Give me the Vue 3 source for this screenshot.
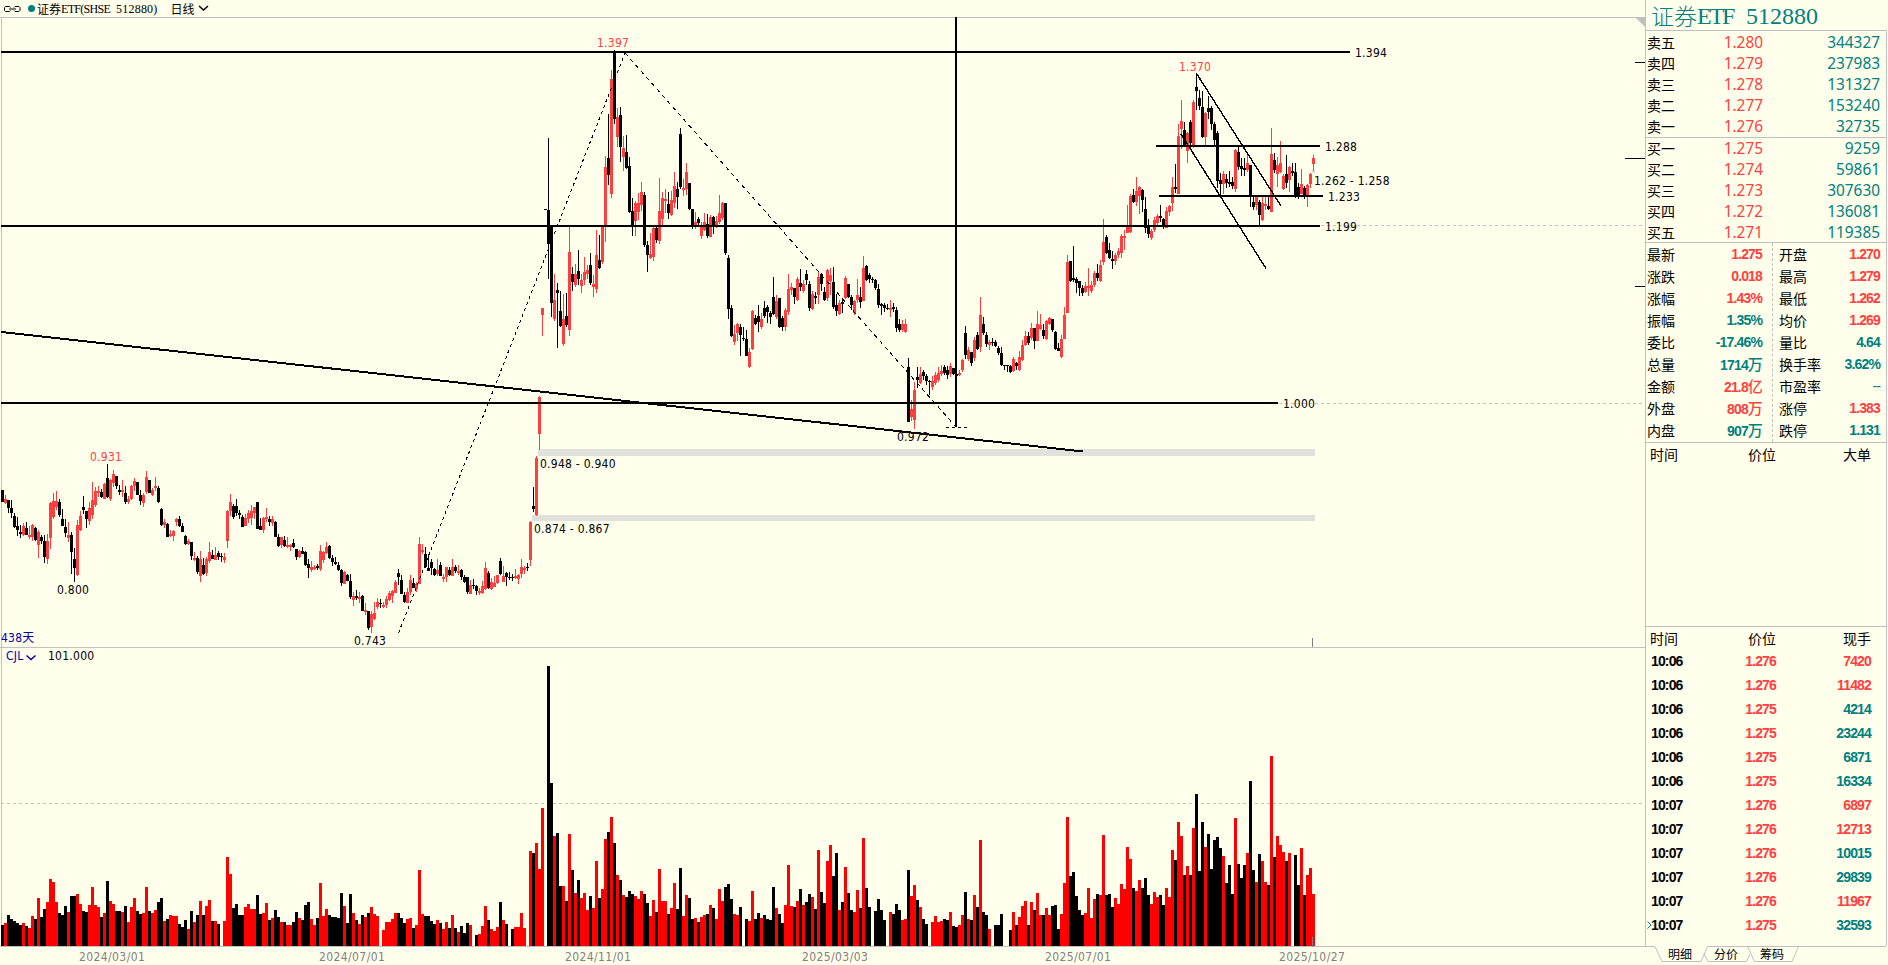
<template>
  <div class="terminal">
    <section class="chart">
      <header class="chart-head">
        <svg class="link-icon" width="17" height="8" viewBox="0 0 17 8">
          <path d="M5.500 1.500H1.500L.5 2.500v3l1 1H5.500L6.500 5.500M6.500 2.500L5.500 1.500M10 2.500l1-1h4l1 1v3l-1 1H11l-1-1M5 4h7" />
        </svg>
        <i class="dot"></i>
        <span class="name">证券<b>ETF(SHSE</b><em>512880)</em></span>
        <span class="period">日线</span>
        <svg class="arrow" width="11" height="7" viewBox="0 0 11 7"><path d="M1 1l4.500 4L10 1" /></svg>
      </header>

      <svg class="price" width="1645" height="630" viewBox="0 17 1645 630">
        <path class="frame" d="M0 17.5H1645M1.500 17V647" />
        <rect class="gap" x="538" y="449" width="777" height="7" />
        <rect class="gap" x="532" y="515" width="783" height="6" />
        <rect class="gap" x="1312" y="170" width="3" height="3" />
        <path class="grid" d="M1 225.5H1643M1 403.5H1643" />
        <g v-for="c in candles" :key="c.x" :class="c.up ? 'up' : 'down'">
          <rect :x="c.x + 1" :y="c.high" width="1" :height="Math.max(1, c.low - c.high)" />
          <rect :x="c.x" :y="c.top" width="3" :height="Math.max(1, c.bottom - c.top)" />
        </g>
        <path class="dash-steep" d="M398.500 633L625 53" />
        <path class="dash-flat" d="M625 53L956 427" />
        <path class="dash-base" d="M946 427.5H967" />
        <path class="level" d="M1 52H1350M1 226H1320M1 403H1278M1156 146H1320M1159 196H1323M956 17V427" />
        <path class="level" d="M1 332L1083 451.500" />
        <path class="channel" d="M1196.500 73.500L1281 206M1181 134L1266 268.500" />
        <path class="tick" d="M1635 62.500H1645M1625 158.500H1645M1635 286.500H1645" />
        <path class="corner" d="M1636 18H1645V27Z" />
        <path class="mark" d="M1312.500 638V647" />
        <text v-for="l in labels" :key="l.text" :x="l.x" :y="l.y" :class="l.cls">{{ l.text }}</text>
      </svg>

      <svg class="volume" width="1645" height="318" viewBox="0 647 1645 318">
        <path class="frame" d="M0 647.5H1645M1.500 647V946M0 946.5H1645" />
        <path class="grid" d="M1 803.5H1643" />
        <rect
          v-for="v in volumes"
          :key="v.x"
          :class="v.up ? 'vol-up' : 'down'"
          :x="v.x"
          :y="v.y"
          width="3"
          :height="946 - v.y"
        />
        <path class="mark" d="M1312.500 937V947" />
        <text class="blue" x="6" y="660">CJL</text>
        <path class="blue-arrow" d="M26.500 655.500l4.500 4L35.500 655.500" />
        <text x="48" y="660">101.000</text>
        <text v-for="d in dates" :key="d.text" class="date" :x="d.x" y="961">{{ d.text }}</text>
      </svg>
    </section>

    <aside class="side">
      <h1>证券<b>ETF</b><em>512880</em></h1>
      <div class="panel">
        <div class="book">
          <div v-for="r in asks" :key="r[0]" class="book-row">
            <span>{{ r[0] }}</span><span class="red">{{ r[1] }}</span><span class="teal">{{ r[2] }}</span>
          </div>
        </div>
        <div class="book bids">
          <div v-for="r in bids" :key="r[0]" class="book-row">
            <span>{{ r[0] }}</span><span class="red">{{ r[1] }}</span><span class="teal">{{ r[2] }}</span>
          </div>
        </div>
        <div class="stats">
          <div v-for="(col, i) in stats" :key="i" class="stats-col">
            <div v-for="s in col" :key="s[0]" class="stat">
              <span>{{ s[0] }}</span>
              <span :class="['num', s[2]]">{{ s[1] }}<i v-if="s[3]">{{ s[3] }}</i></span>
            </div>
          </div>
        </div>
        <div class="big-orders">
          <div class="list-head"><span>时间</span><span>价位</span><span>大单</span></div>
        </div>
        <div class="trades">
          <div class="list-head"><span>时间</span><span>价位</span><span>现手</span></div>
          <div v-for="(t, i) in trades" :key="i" class="trade num">
            <svg v-if="i === trades.length - 1" class="cursor" width="5" height="8" viewBox="0 0 5 8">
              <path d="M.5 .5L4 4L.5 7.500" />
            </svg>
            <span>{{ t[0] }}</span><span class="red">{{ t[1] }}</span><span :class="t[3]">{{ t[2] }}</span>
          </div>
        </div>
      </div>
      <div class="tabs">
        <svg class="tab-lines" width="242" height="17" viewBox="0 0 242 17">
          <path d="M0 .5H10L17 15.500H56L62.500 .5H241M59 8l4 7.500H101.500L105 8M102.500 .5l7 15H147L153.500 .5" />
        </svg>
        <span>明细</span><span>分价</span><span>筹码</span>
      </div>
    </aside>
  </div>
</template>

<script setup>
// bar tops in thirds of a pixel, R = up day, K = down day, - = no bar
const volumeBlocks = [
  {
    base: 640,
    rows: `K855 R849 K825 K837 K843 K849 K855 R849 K858 R864 R828 K837 R774 K831 K807 R786 R717 R726 R786 K819
    K825 K798 R816 K768 K768 R762 R792 K813 K816 R795 R741 R795 R801 K831 R819 K723 R783 R792 K813 K813
    R816 K798 R846 R801 R774 K813 K822 R819 R741 K813 R819 R810 K786 K774 R843 K837 R825 R828 R828 K852
    K861 K840 R867 K813 R846 K825 R783 K825 R798 R780 K843 R843 K852 - R843 R651 R702 K804 K792 K825
    K825 R801 R792 R807 R807 K765 K822 R819 R789 K840 R834 K810 K831 R846 K846 R855 R855 K846 K816 R834
    K840 K795 K786 R837 R855 K834 R729 R828 R807 K825 K831 K831 K834 K759 R798 K849 K762 R819 K840 R852
    K825 R831 K819 R801 R822 R828 - R870 R846 R846 R837 R819 K819 K834 K849 R837 R834 K864 R855 R690
    R822 K828 K828 K843 K852 R840 K849 R867 R846 K864 R825 K864 R876 K858 K879 K849 R855 - K885 R882
    R858 R798 K840 R867 R873 R861 K786 R840 K852 - K867 R861 R861 R819 R864 - R633 K639 R609 R687
    R504 - K78 K429 R588 K579 K738 R738 K783 R582 K690 R759 K720 R774 R759 R810 K768 R804 R663 K774
    R747 R597 K576 R531 K609 R705 K720 R765 K771 K753 K762 R768 R777 R753 K762 K789 R828 R780 K816 R687
    R783 R783 K822 R804 R729 K807 K684 R828 R765 K774 K837 R834 K846 R831 R825 K822 R795 K804 R837 R747
    R783 K741 K732 K777 R822 R825 K801 - K837 R843 R753 K837 K819 R834 K825 K837 K840 K741 R804 K822
    K849 R795 R675 R798 K801 R783 K747 R795 K786 K762 R771 K807 R630 K756 K789 R663 R615 K708 K639 R810
    K786 R681 K759 K810 R816 R750 K804 R594 K744 K801 - K813 K777 K810 K840 - R816 K822 K792 K810`
  },
  {
    base: 740,
    rows: `R540 R537 K390 R468 R435 K480 R501 K537 K552 - R546 R528 R546 R543 K537 K540 R516 K558 K561 R555
    R525 K456 R537 K540 R465 K501 R300 K516 K525 R567 - K555 K555 K522 - - K570 R516 K555 R531
    R498 R483 K555 R486 K510 R459 R525 K525 R504 R525 K498 K495 K567 R522 R429 R231 K408 K396 K468 K510
    K525 R519 R444 R534 R477 K462 R465 R285 K465 K462 K501 R474 R492 R432 R447 R321 R357 K444 R453 R420
    K444 K414 K465 R492 R456 R471 K465 K495 R444 R471 R330 K360 R246 R288 K405 R378 K405 R264 K162 K393
    K246 R321 K282 K387 K300 K291 K324 R348 K429 K375 K462 R234 K372 K414 K375 R339 K123 K390 R426 K342
    R363 R426 K435 R48 K351 R288 R315 R336 K363 R339 - K345 K435 R324 K465 R405 R384 R462`
  }
]

// high, body top, body bottom, low
const candleBlocks = [
  {
    base: 440,
    rows: `150,150,185,185 165,177,189,192 180,180,203,218 180,203,220,235 218,228,262,265 230,258,270,288
    255,276,282,294 248,258,285,288 246,264,285,285 258,285,292,297 252,255,290,303 262,264,300,303
    270,276,315,354 286,290,303,312 285,303,350,369 282,303,357,372 185,189,294,327 158,183,230,237
    153,183,200,209 177,186,225,231 207,237,257,258 237,261,279,291 245,285,294,306 276,285,336,402
    323,357,384,426 240,255,404,408 213,228,270,273 168,201,210,222 213,213,236,264 185,204,243,255
    126,180,225,237 141,153,195,201 137,153,159,171 148,156,172,174 129,132,176,178 72,114,172,175
    117,120,178,182 90,102,129,141 108,108,137,147 135,150,155,165 120,150,155,171 137,159,186,192
    168,177,186,192 136,138,177,180 114,123,138,153 126,126,164,166 150,165,183,195 160,165,188,201
    93,111,156,162 120,120,158,160 144,150,165,168 112,138,144,152 138,144,186,189 204,207,255,258
    237,246,255,264 249,252,290,291 270,283,288,291 270,272,288,302 234,237,246,257 228,236,258,261
    248,258,275,276 285,288,311,314 297,303,311,315 306,306,348,360 336,354,359,362 348,354,395,402
    333,357,407,426 354,375,402,405 351,357,398,408 306,336,362,369 330,345,356,358 321,345,359,360
    334,339,350,360 339,348,351,366 339,351,360,369 209,213,303,323 162,186,213,228 192,198,230,237
    177,198,219,228 210,219,224,237 226,231,260,261 222,234,258,258 210,219,236,249 196,213,233,255
    201,201,220,237 186,186,266,267 234,258,269,270 231,234,270,279 205,231,236,246 228,237,246,258
    228,237,248,258 243,246,290,291 282,291,318,321 291,291,314,323 288,300,317,320 291,315,321,323
    311,315,321,332 297,310,321,323 327,327,351,359 329,333,351,354 320,333,341,342 333,336,375,378
    357,372,384,414 363,381,389,396 374,380,386,389 372,378,383,390 315,333,387,392 333,336,359,369
    306,320,338,342 315,318,354,356 345,354,366,378 350,366,372,375 366,376,389,393 386,390,429,438
    392,395,431,432 402,404,423,423 402,423,470,477 456,467,479,497 450,468,473,480 456,471,476,489
    464,468,512,513 488,509,515,525 512,512,563,570 512,521,561,579 486,519,537,540 474,486,500,507
    477,489,492,503 485,495,501,504 468,477,495,504 452,459,479,483 449,452,467,488 420,426,458,459
    387,399,410,434`
  },
  {
    base: 380,
    rows: `585,600,641,642 636,645,666,669 624,636,668,669 585,600,636,645 594,609,624,624 605,612,627,635
    471,492,611,612 492,510,516,522 501,521,560,563 522,563,572,573 537,545,564,585 564,567,584,587
    537,570,582,588 546,555,587,588 582,590,598,606 561,561,590,606 561,570,585,587 537,561,587,588
    555,562,572,579 555,573,578,585 567,569,591,599 585,591,605,608 591,591,636,641 600,615,641,642
    597,615,618,627 615,617,633,645 624,633,639,645 603,618,639,641 546,564,626,629 573,579,624,626
    594,606,626,629 588,609,620,621 585,585,609,612 534,543,581,584 557,587,605,606 576,579,590,617
    576,590,593,600 581,592,595,602 567,588,594,597 582,585,597,612 537,561,582,593 557,563,570,582
    549,561,564,573 423,426,540,558 321,378,387,396 228,234,405,408 48,51,161,210`
  },
  {
    base: 30,
    rows: `834,834,855,917 537,537,540,540 324,540,641,747 587,587,819,861 732,810,867,873 759,780,789,954
    783,843,888,891 792,867,941,948 789,857,885,890 588,666,899,917 711,732,756,783 702,732,765,770
    660,723,747,765 732,750,768,789 681,726,750,765 705,720,732,747 669,705,759,765 735,762,771,800
    600,675,776,789 615,690,714,718 590,590,696,702 378,411,587,636 252,384,434,465 120,147,491,504
    60,66,267,282 234,261,321,351 231,255,350,396 318,354,380,423 315,366,414,416 381,408,545,549
    504,543,590,618 513,519,573,618 489,519,546,570 456,486,525,543 486,495,645,651 633,645,675,726
    609,672,683,687 590,594,681,693 591,594,630,639 444,543,633,642 486,504,567,585 477,507,513,549
    486,522,549,567 483,510,554,558 426,468,519,534 456,477,501,537 294,312,471,477 447,474,480,498
    399,426,477,495 459,459,537,540 537,537,585,597 546,576,585,597 561,567,579,591 576,590,618,627
    549,576,600,603 552,582,618,624 555,561,620,621 558,561,585,612 558,573,588,594 495,549,576,582
    516,519,564,570 519,519,669,675 675,684,837,867 825,834,917,921 885,912,936,945 879,882,909,933
    882,891,914,978 891,924,927,933 900,927,978,978 954,966,1011,1014 840,843,957,960 855,864,882,885
    825,858,876,906 849,867,891,897 813,834,858,864 825,831,846,879 843,849,861,882 741,801,852,855
    795,813,860,867 804,804,891,893 858,864,891,903 834,840,891,903 732,777,846,855 759,771,780,795
    774,774,801,822 741,747,810,813 717,759,771,783 750,762,783,789 720,732,750,765 753,762,834,843
    783,792,837,840 786,798,804,822 726,741,795,822 729,732,762,783 771,786,810,813 717,720,804,813
    714,735,753,795 711,756,831,837 792,825,843,858 810,819,852,855 804,816,822,849 738,744,804,807
    762,762,801,804 795,801,825,840 810,813,848,855 747,795,810,819 771,801,816,834 678,714,812,813
    705,708,750,753 729,735,747,759 741,747,750,759 747,750,774,780 762,777,825,834 819,822,828,855
    819,825,834,846 822,834,837,840 810,834,840,861 819,831,837,846 831,840,894,906 867,882,900,906
    870,882,900,906 867,882,906,909`
  },
  {
    base: 240,
    rows: `354,381,545,546 480,507,531,543 426,450,540,567 381,411,420,444 381,402,429,432 390,396,408,420
    402,408,423,435 420,423,426,465 408,423,441,450 396,405,429,435 381,399,420,426 375,393,402,408
    375,381,399,405 378,390,405,417 369,378,402,411 384,384,402,405 384,402,408,410 390,399,405,408
    357,360,390,396 258,279,345,357 321,330,357,363 336,336,369,378 291,300,354,363 276,285,327,330
    171,225,321,336 231,252,279,285 276,285,312,321 300,306,315,330 294,306,309,318 300,306,318,321
    318,324,339,345 321,339,375,378 375,375,378,390 375,375,378,396 375,378,396,399 351,357,393,396
    366,369,378,390 333,351,390,393 300,315,360,363 273,288,315,318 276,288,309,315 249,264,294,300
    264,264,303,327 213,252,303,303 222,255,267,270 252,270,288,297 240,243,297,300 231,234,252,255
    237,237,270,276 273,276,327,330 309,324,333,333 285,297,351,354 201,225,297,297 45,66,219,219`
  },
  {
    base: 50,
    rows: `633,633,693,697 588,685,690,696 681,687,699,729 693,693,714,738 705,714,729,738 696,708,726,729
    654,708,714,738 693,705,723,729 663,669,705,711 642,669,684,693 630,645,693,696 507,576,636,645
    555,561,609,612 579,600,624,627 603,627,633,657 609,615,633,645 594,603,615,624 552,558,609,624
    540,558,564,600 465,528,549,549 432,438,546,549 417,435,456,459 381,423,456,468 408,411,438,492
    417,420,450,486 441,477,534,549 507,531,552,564 537,543,564,570 501,510,540,546 492,498,519,528
    465,498,504,516 504,507,531,537 471,483,534,534 465,468,486,498 381,411,459,483 342,411,417,429
    222,258,432,432 150,213,237,297 216,240,288,291 246,249,303,339 210,216,279,300 150,156,291,294
    69,111,123,180 120,144,168,180 123,171,261,264 186,189,261,288 138,174,186,207 168,174,222,240
    216,222,270,288 243,249,393,414 369,390,402,438 363,372,402,432 372,387,399,414 363,396,402,411
    381,396,408,417 297,300,417,426 288,306,351,360 324,348,357,378 324,354,360,378 312,339,360,366
    345,345,438,471 438,456,471,480 438,441,465,480 450,456,495,528 441,459,510,513 441,462,468,480
    441,468,477,480 234,312,486,486 309,330,360,369 321,345,372,411 273,339,366,369 372,378,417,420
    315,372,399,414 348,351,390,426 339,363,369,378 339,366,438,444 399,411,441,447 357,402,432,432
    408,414,441,447 402,405,438,471 369,372,402,414 315,324,342,363`
  }
]

const days = volumeBlocks.flatMap(b =>
  b.rows.trim().split(/\s+/).map(t => ({
    up: t[0] === 'R',
    y: t === '-' ? null : b.base + Math.round(Number(t.slice(1)) / 3)
  }))
).map((d, i) => ({ ...d, x: 1 + i * 3 }))

// the first bar after the long gap up closed limit-up
days[180].up = true

const volumes = days.filter(d => d.y !== null)

const candles = candleBlocks.flatMap(b =>
  b.rows.trim().split(/\s+/).map(t => t.split(',').map(n => b.base + Math.round(n / 3)))
).map(([high, top, bottom, low], i) => ({ x: 1 + i * 3, up: days[i].up, high, top, bottom, low }))

const labels = [
  { text: '0.931', x: 90, y: 461, cls: 'red' },
  { text: '1.397', x: 597, y: 47, cls: 'red' },
  { text: '1.370', x: 1179, y: 71, cls: 'red' },
  { text: '0.800', x: 57, y: 594 },
  { text: '0.743', x: 354, y: 645 },
  { text: '0.972', x: 897, y: 441 },
  { text: '1.394', x: 1355, y: 57 },
  { text: '1.288', x: 1325, y: 151 },
  { text: '1.262 - 1.258', x: 1314, y: 185 },
  { text: '1.233', x: 1328, y: 201 },
  { text: '1.199', x: 1325, y: 231 },
  { text: '1.000', x: 1283, y: 408 },
  { text: '0.948 - 0.940', x: 540, y: 468 },
  { text: '0.874 - 0.867', x: 534, y: 533 },
  { text: '438天', x: 1, y: 642, cls: 'blue' }
]

const dates = [
  { text: '2024/03/01', x: 79 },
  { text: '2024/07/01', x: 319 },
  { text: '2024/11/01', x: 565 },
  { text: '2025/03/03', x: 802 },
  { text: '2025/07/01', x: 1045 },
  { text: '2025/10/27', x: 1279 }
]

const asks = [
  ['卖五', '1.280', 344327],
  ['卖四', '1.279', 237983],
  ['卖三', '1.278', 131327],
  ['卖二', '1.277', 153240],
  ['卖一', '1.276', 32735]
]
const bids = [
  ['买一', '1.275', 9259],
  ['买二', '1.274', 59861],
  ['买三', '1.273', 307630],
  ['买四', '1.272', 136081],
  ['买五', '1.271', 119385]
]

const stats = [
  [
    ['最新', '1.275', 'red'],
    ['涨跌', '0.018', 'red'],
    ['涨幅', '1.43%', 'red'],
    ['振幅', '1.35%', 'teal'],
    ['委比', '-17.46%', 'teal'],
    ['总量', '1714', 'teal', '万'],
    ['金额', '21.8', 'red', '亿'],
    ['外盘', '808', 'red', '万'],
    ['内盘', '907', 'teal', '万']
  ],
  [
    ['开盘', '1.270', 'red'],
    ['最高', '1.279', 'red'],
    ['最低', '1.262', 'red'],
    ['均价', '1.269', 'red'],
    ['量比', '4.64', 'teal'],
    ['换手率', '3.62%', 'teal'],
    ['市盈率', '--', 'teal none'],
    ['涨停', '1.383', 'red'],
    ['跌停', '1.131', 'teal']
  ]
]

const trades = [
  ['10:06', '1.276', 7420, 'red'],
  ['10:06', '1.276', 11482, 'red'],
  ['10:06', '1.275', 4214, 'teal'],
  ['10:06', '1.275', 23244, 'teal'],
  ['10:06', '1.275', 6871, 'teal'],
  ['10:06', '1.275', 16334, 'teal'],
  ['10:07', '1.276', 6897, 'red'],
  ['10:07', '1.276', 12713, 'red'],
  ['10:07', '1.276', 10015, 'teal'],
  ['10:07', '1.276', 29839, 'teal'],
  ['10:07', '1.276', 11967, 'red'],
  ['10:07', '1.275', 32593, 'teal']
]
</script>

<style>
body {
  background: #ffffec;
}
</style>

<style scoped>
.terminal {
  display: flex;
  width: 1888px;
  height: 965px;
  overflow: hidden;
  background: #ffffec;
  color: #000;
  font-family: "Noto Sans CJK SC", sans-serif;
}
.chart {
  display: flex;
  flex-direction: column;
  width: 1645px;
}
.chart svg {
  display: block;
}
.chart-head {
  display: flex;
  align-items: center;
  height: 17px;
  padding-left: 4px;
  font-size: 12px;
  line-height: 16px;
}
.link-icon path {
  fill: none;
  stroke: #000;
}
.dot {
  width: 7px;
  height: 7px;
  margin: 0 2px 0 7px;
  border-radius: 50%;
  background: #008080;
}
.name {
  display: flex;
}
.name b,
.name em {
  font: normal 12px/16px "Liberation Serif", serif;
}
.name b {
  letter-spacing: -0.7px;
}
.name em {
  margin-left: 6px;
  letter-spacing: 0.2px;
}
.period {
  margin: 0 3px 0 13px;
}
.arrow path {
  fill: none;
  stroke: #000;
  stroke-width: 1.5;
}
.price text,
.volume text {
  font-family: "DejaVu Sans Condensed", "Noto Sans", "Noto Sans CJK SC", sans-serif;
  font-size: 12px;
  letter-spacing: 0.25px;
}
.price rect,
.volume rect,
.frame,
.grid {
  shape-rendering: crispEdges;
}
.frame,
.grid,
.mark {
  fill: none;
  stroke: #c0c0c0;
}
.grid {
  stroke-dasharray: 3 3;
}
.mark {
  stroke: #808080;
}
.gap {
  fill: #e1e1dc;
}
.up {
  fill: #ff3f3f;
}
.down {
  fill: #000;
}
.vol-up {
  fill: #f00;
}
.level,
.channel,
.tick,
.dash-steep,
.dash-flat,
.dash-base {
  fill: none;
  stroke: #000;
  shape-rendering: crispEdges;
}
.level {
  stroke-width: 2;
}
.channel {
  stroke-width: 1.4;
}
.dash-steep {
  stroke-dasharray: 3.2 3.2;
}
.dash-flat {
  stroke-dasharray: 4.2 3.8;
}
.dash-base {
  stroke-dasharray: 3 3;
}
.corner {
  fill: #c0c0c0;
}
.red {
  color: #ff4040;
  fill: #ff4040;
}
.teal {
  color: #008080;
}
.blue {
  fill: #0000a0;
}
.blue-arrow {
  fill: none;
  stroke: #0000a0;
  stroke-width: 1.5;
}
.volume .date {
  fill: #808080;
  letter-spacing: 0.4px;
}

.side {
  display: flex;
  flex-direction: column;
  width: 243px;
  font-size: 14px;
}
.side h1 {
  display: flex;
  box-sizing: border-box;
  height: 30px;
  margin: 0;
  padding: 1px 0 0 5px;
  border-left: 1px solid #c0c0c0;
  color: #008080;
  font-size: 23px;
  font-weight: 300;
  line-height: 28px;
}
.side h1 b,
.side h1 em {
  font: normal 24px/30px "Liberation Serif", serif;
}
.side h1 b {
  letter-spacing: -2.2px;
}
.side h1 em {
  margin-left: 13px;
}
.panel {
  box-sizing: border-box;
  width: 242px;
  height: 916px;
  border: 1px solid #c0c0c0;
  border-bottom: none;
}
.book {
  box-sizing: border-box;
  height: 107px;
  padding-top: 1px;
  border-bottom: 1px solid #c0c0c0;
}
.book.bids {
  height: 105px;
  padding: 0;
}
.book-row {
  display: grid;
  grid-template-columns: 30px 86px 1fr;
  height: 21px;
  padding: 0 6px 0 1px;
  line-height: 21px;
}
.book-row .red,
.book-row .teal {
  font-family: "Noto Sans", sans-serif;
  font-size: 15.4px;
  text-align: right;
}
.stats {
  display: flex;
  box-sizing: border-box;
  height: 200px;
  border-bottom: 1px solid #c0c0c0;
}
.stats-col {
  box-sizing: border-box;
  width: 126px;
  padding: 0 10px 0 1px;
}
.stats-col + .stats-col {
  width: 114px;
  padding: 0 6px;
  border-left: 1px dashed #c0c0c0;
}
.stat {
  display: flex;
  justify-content: space-between;
  height: 22px;
  line-height: 22px;
}
.num {
  font-family: "Liberation Sans", sans-serif;
  font-size: 14px;
  font-weight: bold;
  letter-spacing: -0.85px;
}
.num i {
  font: normal 500 15px "Noto Sans CJK SC", sans-serif;
}
.num.none {
  font-weight: normal;
}
.big-orders {
  box-sizing: border-box;
  height: 184px;
  border-bottom: 1px solid #c0c0c0;
}
.list-head,
.trade {
  display: grid;
  grid-template-columns: 40px 86px 1fr;
  height: 24px;
  padding: 0 15px 0 4px;
  line-height: 22px;
}
.list-head span + span,
.trade span + span {
  text-align: right;
}
.list-head {
  height: 22px;
}
.trade {
  position: relative;
  padding-left: 5px;
  grid-template-columns: 39px 86px 1fr;
  line-height: 24px;
}
.cursor {
  position: absolute;
  left: 1px;
  top: 8px;
}
.cursor path {
  fill: none;
  stroke: #008080;
}
.tabs {
  position: relative;
  display: flex;
  gap: 22px;
  height: 19px;
  padding-left: 23px;
  font-size: 12px;
  line-height: 16px;
}
.tab-lines {
  position: absolute;
  left: 0;
  top: 0;
}
.tab-lines path {
  fill: none;
  stroke: #c0c0c0;
}
</style>
